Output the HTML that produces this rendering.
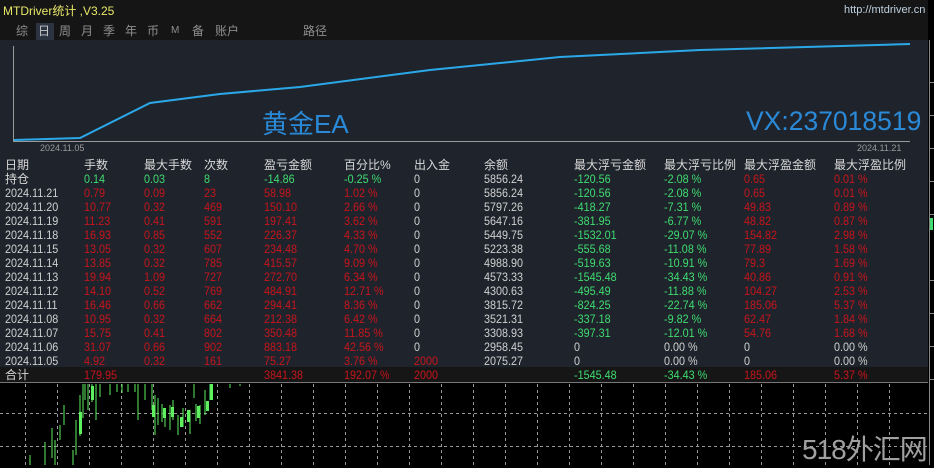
<!DOCTYPE html>
<html><head><meta charset="utf-8"><style>
*{margin:0;padding:0;box-sizing:border-box}
body{width:934px;height:465px;background:#000;position:relative;overflow:hidden;font-family:"Liberation Sans","Noto Sans CJK SC",sans-serif;}
.a{position:absolute;white-space:nowrap}
#top{position:absolute;left:0;top:0;width:928px;height:40px;background:#151515}
#panel{position:absolute;left:0;top:40px;width:928px;height:343px;background:#1f242c;border-bottom:1px solid #777}
.tab{position:absolute;top:23px;font-size:12px;color:#8f8f8f;line-height:16px}
.row{position:absolute;left:0;width:928px;height:14px;font-size:12px;line-height:14px}
.row span{position:absolute;top:0}
.row span.w,.row span.r,.row span.g{transform:scaleX(.9);transform-origin:0 0}
.w{color:#d0d0d0}.r{color:#c8141c}.g{color:#3fdc70}
.h{font-size:12px;color:#d8d8d8}
</style></head><body>
<div id="top"></div>
<div class="a" style="left:3px;top:2px;font-size:12px;color:#e8e86a">MTDriver统计 ,V3.25</div>
<div class="a" style="left:844px;top:4px;font-size:11px;color:#bfd0e0">http://mtdriver.cn</div>
<div class="a" style="left:36px;top:23px;width:18px;height:17px;background:#2b3440"></div>
<div class="tab" style="left:16px">综</div><div class="tab" style="left:38px;color:#c8c8c8">日</div><div class="tab" style="left:59px">周</div><div class="tab" style="left:81px">月</div><div class="tab" style="left:103px">季</div><div class="tab" style="left:125px">年</div><div class="tab" style="left:147px">币</div><div class="tab" style="left:171px;font-size:10px">M</div><div class="tab" style="left:192px">备</div><div class="tab" style="left:215px">账户</div><div class="tab" style="left:303px">路径</div>
<svg class="a" style="left:0;top:0" width="934" height="465">
<rect x="929" y="40" width="1" height="425" fill="#888"/>
<g fill="#888"><rect x="930" y="82" width="4" height="1"/><rect x="930" y="115" width="4" height="1"/><rect x="930" y="148" width="4" height="1"/><rect x="930" y="181" width="4" height="1"/><rect x="930" y="214" width="4" height="1"/><rect x="930" y="280" width="4" height="1"/><rect x="930" y="313" width="4" height="1"/><rect x="930" y="346" width="4" height="1"/><rect x="930" y="379" width="4" height="1"/></g>
<rect x="930" y="218" width="3" height="12" fill="#3fdc70"/>
<g stroke="#999" stroke-dasharray="3,3" stroke-width="1">
<line x1="0" y1="413.5" x2="928" y2="413.5"/><line x1="0" y1="446.5" x2="928" y2="446.5"/>
<line x1="25.5" y1="384" x2="25.5" y2="465"/><line x1="57.5" y1="384" x2="57.5" y2="465"/><line x1="89.5" y1="384" x2="89.5" y2="465"/><line x1="121.5" y1="384" x2="121.5" y2="465"/><line x1="153.5" y1="384" x2="153.5" y2="465"/><line x1="185.5" y1="384" x2="185.5" y2="465"/><line x1="217.5" y1="384" x2="217.5" y2="465"/><line x1="249.5" y1="384" x2="249.5" y2="465"/><line x1="281.5" y1="384" x2="281.5" y2="465"/><line x1="313.5" y1="384" x2="313.5" y2="465"/><line x1="345.5" y1="384" x2="345.5" y2="465"/><line x1="377.5" y1="384" x2="377.5" y2="465"/><line x1="409.5" y1="384" x2="409.5" y2="465"/><line x1="441.5" y1="384" x2="441.5" y2="465"/><line x1="473.5" y1="384" x2="473.5" y2="465"/><line x1="505.5" y1="384" x2="505.5" y2="465"/><line x1="537.5" y1="384" x2="537.5" y2="465"/><line x1="569.5" y1="384" x2="569.5" y2="465"/><line x1="601.5" y1="384" x2="601.5" y2="465"/><line x1="633.5" y1="384" x2="633.5" y2="465"/><line x1="665.5" y1="384" x2="665.5" y2="465"/><line x1="697.5" y1="384" x2="697.5" y2="465"/><line x1="729.5" y1="384" x2="729.5" y2="465"/><line x1="761.5" y1="384" x2="761.5" y2="465"/><line x1="793.5" y1="384" x2="793.5" y2="465"/><line x1="825.5" y1="384" x2="825.5" y2="465"/><line x1="857.5" y1="384" x2="857.5" y2="465"/><line x1="889.5" y1="384" x2="889.5" y2="465"/>
</g>
<g stroke="#5ef05e" stroke-width="1" fill="none">
<path d="M30 465V455M45 465V442M52 458V428M55 465V440M60 440V425M64 425V405M73 465V450M76 455V420M80 436V395M83 418V384M85 400V384M88 410V384M92 402V384M96 420V384M100 397V384M110 395V384M117 392V384M122 393V384M128 392V384M135 392V384M138 420V384M145 400V384M152 410V384M155 435V395M158 425V398M162 422V404M165 427V410M170 430V405M173 420V400M178 435V415M183 427V408M190 434V410M194 398V384M196 421V404M200 424V405M205 415V390M210 400V384M212 394V384M230 388V384M240 384V386"/>
</g>
<g fill="#5ef05e"><rect x="79" y="412" width="3" height="22"/><rect x="91" y="386" width="3" height="14"/><rect x="152" y="405" width="3" height="12"/><rect x="163" y="408" width="3" height="10"/><rect x="171" y="407" width="3" height="10"/><rect x="180" y="417" width="3" height="10"/><rect x="187" y="410" width="3" height="12"/><rect x="197" y="406" width="3" height="12"/><rect x="206" y="401" width="3" height="10"/><rect x="210" y="384" width="3" height="16"/></g>
</svg>
<div id="panel"></div>
<svg class="a" style="left:0;top:0" width="934" height="200">
<line x1="13.5" y1="46" x2="13.5" y2="141" stroke="#999"/>
<line x1="13" y1="141.5" x2="910" y2="141.5" stroke="#999"/>
<polyline points="14,140 80,138 150,103 220,94 300,87 430,70 560,57 700,50 910,44" fill="none" stroke="#2aa8e8" stroke-width="2"/>
</svg>
<div class="a" style="left:40px;top:143px;font-size:9px;color:#999">2024.11.05</div>
<div class="a" style="left:857px;top:143px;font-size:9px;color:#999">2024.11.21</div>
<div class="a" style="left:262px;top:104px;font-size:26px;color:#2a8ad8">黄金EA</div>
<div class="a" style="left:746px;top:106px;font-size:26.5px;color:#2a8ad8">VX:237018519</div>
<div class="a" style="left:0;top:367px;width:928px;height:15px;background:#161616"></div>

<div class="row h" style="top:158px"><span style="left:5px">日期</span><span style="left:84px">手数</span><span style="left:144px">最大手数</span><span style="left:204px">次数</span><span style="left:264px">盈亏金额</span><span style="left:344px">百分比%</span><span style="left:414px">出入金</span><span style="left:484px">余额</span><span style="left:574px">最大浮亏金额</span><span style="left:664px">最大浮亏比例</span><span style="left:744px">最大浮盈金额</span><span style="left:834px">最大浮盈比例</span></div>
<div class="row" style="top:172px"><span class="h" style="left:5px">持仓</span><span class="g" style="left:84px">0.14</span><span class="g" style="left:144px">0.03</span><span class="g" style="left:204px">8</span><span class="g" style="left:264px">-14.86</span><span class="g" style="left:344px">-0.25 %</span><span class="w" style="left:414px">0</span><span class="w" style="left:484px">5856.24</span><span class="g" style="left:574px">-120.56</span><span class="g" style="left:664px">-2.08 %</span><span class="r" style="left:744px">0.65</span><span class="r" style="left:834px">0.01 %</span></div>
<div class="row" style="top:186px"><span class="w" style="left:5px">2024.11.21</span><span class="r" style="left:84px">0.79</span><span class="r" style="left:144px">0.09</span><span class="r" style="left:204px">23</span><span class="r" style="left:264px">58.98</span><span class="r" style="left:344px">1.02 %</span><span class="w" style="left:414px">0</span><span class="w" style="left:484px">5856.24</span><span class="g" style="left:574px">-120.56</span><span class="g" style="left:664px">-2.08 %</span><span class="r" style="left:744px">0.65</span><span class="r" style="left:834px">0.01 %</span></div>
<div class="row" style="top:200px"><span class="w" style="left:5px">2024.11.20</span><span class="r" style="left:84px">10.77</span><span class="r" style="left:144px">0.32</span><span class="r" style="left:204px">469</span><span class="r" style="left:264px">150.10</span><span class="r" style="left:344px">2.66 %</span><span class="w" style="left:414px">0</span><span class="w" style="left:484px">5797.26</span><span class="g" style="left:574px">-418.27</span><span class="g" style="left:664px">-7.31 %</span><span class="r" style="left:744px">49.83</span><span class="r" style="left:834px">0.89 %</span></div>
<div class="row" style="top:214px"><span class="w" style="left:5px">2024.11.19</span><span class="r" style="left:84px">11.23</span><span class="r" style="left:144px">0.41</span><span class="r" style="left:204px">591</span><span class="r" style="left:264px">197.41</span><span class="r" style="left:344px">3.62 %</span><span class="w" style="left:414px">0</span><span class="w" style="left:484px">5647.16</span><span class="g" style="left:574px">-381.95</span><span class="g" style="left:664px">-6.77 %</span><span class="r" style="left:744px">48.82</span><span class="r" style="left:834px">0.87 %</span></div>
<div class="row" style="top:228px"><span class="w" style="left:5px">2024.11.18</span><span class="r" style="left:84px">16.93</span><span class="r" style="left:144px">0.85</span><span class="r" style="left:204px">552</span><span class="r" style="left:264px">226.37</span><span class="r" style="left:344px">4.33 %</span><span class="w" style="left:414px">0</span><span class="w" style="left:484px">5449.75</span><span class="g" style="left:574px">-1532.01</span><span class="g" style="left:664px">-29.07 %</span><span class="r" style="left:744px">154.82</span><span class="r" style="left:834px">2.98 %</span></div>
<div class="row" style="top:242px"><span class="w" style="left:5px">2024.11.15</span><span class="r" style="left:84px">13.05</span><span class="r" style="left:144px">0.32</span><span class="r" style="left:204px">607</span><span class="r" style="left:264px">234.48</span><span class="r" style="left:344px">4.70 %</span><span class="w" style="left:414px">0</span><span class="w" style="left:484px">5223.38</span><span class="g" style="left:574px">-555.68</span><span class="g" style="left:664px">-11.08 %</span><span class="r" style="left:744px">77.89</span><span class="r" style="left:834px">1.58 %</span></div>
<div class="row" style="top:256px"><span class="w" style="left:5px">2024.11.14</span><span class="r" style="left:84px">13.85</span><span class="r" style="left:144px">0.32</span><span class="r" style="left:204px">785</span><span class="r" style="left:264px">415.57</span><span class="r" style="left:344px">9.09 %</span><span class="w" style="left:414px">0</span><span class="w" style="left:484px">4988.90</span><span class="g" style="left:574px">-519.63</span><span class="g" style="left:664px">-10.91 %</span><span class="r" style="left:744px">79.3</span><span class="r" style="left:834px">1.69 %</span></div>
<div class="row" style="top:270px"><span class="w" style="left:5px">2024.11.13</span><span class="r" style="left:84px">19.94</span><span class="r" style="left:144px">1.09</span><span class="r" style="left:204px">727</span><span class="r" style="left:264px">272.70</span><span class="r" style="left:344px">6.34 %</span><span class="w" style="left:414px">0</span><span class="w" style="left:484px">4573.33</span><span class="g" style="left:574px">-1545.48</span><span class="g" style="left:664px">-34.43 %</span><span class="r" style="left:744px">40.86</span><span class="r" style="left:834px">0.91 %</span></div>
<div class="row" style="top:284px"><span class="w" style="left:5px">2024.11.12</span><span class="r" style="left:84px">14.10</span><span class="r" style="left:144px">0.52</span><span class="r" style="left:204px">769</span><span class="r" style="left:264px">484.91</span><span class="r" style="left:344px">12.71 %</span><span class="w" style="left:414px">0</span><span class="w" style="left:484px">4300.63</span><span class="g" style="left:574px">-495.49</span><span class="g" style="left:664px">-11.88 %</span><span class="r" style="left:744px">104.27</span><span class="r" style="left:834px">2.53 %</span></div>
<div class="row" style="top:298px"><span class="w" style="left:5px">2024.11.11</span><span class="r" style="left:84px">16.46</span><span class="r" style="left:144px">0.66</span><span class="r" style="left:204px">662</span><span class="r" style="left:264px">294.41</span><span class="r" style="left:344px">8.36 %</span><span class="w" style="left:414px">0</span><span class="w" style="left:484px">3815.72</span><span class="g" style="left:574px">-824.25</span><span class="g" style="left:664px">-22.74 %</span><span class="r" style="left:744px">185.06</span><span class="r" style="left:834px">5.37 %</span></div>
<div class="row" style="top:312px"><span class="w" style="left:5px">2024.11.08</span><span class="r" style="left:84px">10.95</span><span class="r" style="left:144px">0.32</span><span class="r" style="left:204px">664</span><span class="r" style="left:264px">212.38</span><span class="r" style="left:344px">6.42 %</span><span class="w" style="left:414px">0</span><span class="w" style="left:484px">3521.31</span><span class="g" style="left:574px">-337.18</span><span class="g" style="left:664px">-9.82 %</span><span class="r" style="left:744px">62.47</span><span class="r" style="left:834px">1.84 %</span></div>
<div class="row" style="top:326px"><span class="w" style="left:5px">2024.11.07</span><span class="r" style="left:84px">15.75</span><span class="r" style="left:144px">0.41</span><span class="r" style="left:204px">802</span><span class="r" style="left:264px">350.48</span><span class="r" style="left:344px">11.85 %</span><span class="w" style="left:414px">0</span><span class="w" style="left:484px">3308.93</span><span class="g" style="left:574px">-397.31</span><span class="g" style="left:664px">-12.01 %</span><span class="r" style="left:744px">54.76</span><span class="r" style="left:834px">1.68 %</span></div>
<div class="row" style="top:340px"><span class="w" style="left:5px">2024.11.06</span><span class="r" style="left:84px">31.07</span><span class="r" style="left:144px">0.66</span><span class="r" style="left:204px">902</span><span class="r" style="left:264px">883.18</span><span class="r" style="left:344px">42.56 %</span><span class="w" style="left:414px">0</span><span class="w" style="left:484px">2958.45</span><span class="w" style="left:574px">0</span><span class="w" style="left:664px">0.00 %</span><span class="w" style="left:744px">0</span><span class="w" style="left:834px">0.00 %</span></div>
<div class="row" style="top:354px"><span class="w" style="left:5px">2024.11.05</span><span class="r" style="left:84px">4.92</span><span class="r" style="left:144px">0.32</span><span class="r" style="left:204px">161</span><span class="r" style="left:264px">75.27</span><span class="r" style="left:344px">3.76 %</span><span class="r" style="left:414px">2000</span><span class="w" style="left:484px">2075.27</span><span class="w" style="left:574px">0</span><span class="w" style="left:664px">0.00 %</span><span class="w" style="left:744px">0</span><span class="w" style="left:834px">0.00 %</span></div>
<div class="row" style="top:368px"><span class="h" style="left:5px">合计</span><span class="r" style="left:84px">179.95</span><span class="r" style="left:264px">3841.38</span><span class="r" style="left:344px">192.07 %</span><span class="r" style="left:414px">2000</span><span class="g" style="left:574px">-1545.48</span><span class="g" style="left:664px">-34.43 %</span><span class="r" style="left:744px">185.06</span><span class="r" style="left:834px">5.37 %</span></div>

<div class="a" style="left:802px;top:428px;font-size:28px;color:#a0a0a0;letter-spacing:-1px">518外汇网</div>
</body></html>
